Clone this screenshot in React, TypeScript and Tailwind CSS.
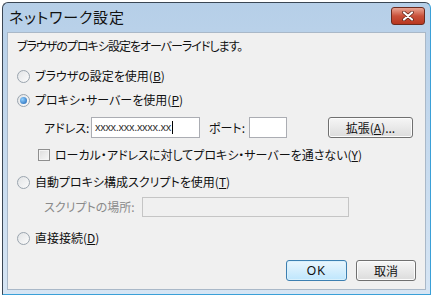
import React from "react"

const jp = "font-['Meiryo_UI','Noto_Sans_CJK_JP',sans-serif] [font-feature-settings:'palt']"

function Radio({ checked }: { checked?: boolean }) {
  return (
    <span className="w-[13px] h-[13px] rounded-full border border-[#9aa4ae] bg-gradient-to-br from-[#e2e4e6] to-[#fbfbfb] flex items-center justify-center shrink-0">
      {checked && <span className="w-[7px] h-[7px] rounded-full bg-[radial-gradient(circle_at_35%_35%,#8fd0ff,#1a5fb0)]" />}
    </span>
  )
}

function Btn({ children, primary, w }: { children: React.ReactNode; primary?: boolean; w: string }) {
  return (
    <div
      className={`${w} h-[21px] rounded-[3px] border flex items-center justify-center text-[12px] text-[#111] ${
        primary
          ? "border-[#3c7fb1] bg-gradient-to-b from-[#eaf6fd] to-[#bee6fd] shadow-[inset_0_0_0_1px_#d9f0fc]"
          : "border-[#707070] bg-gradient-to-b from-[#f6f6f6] to-[#dcdcdc] shadow-[inset_0_0_0_1px_#fcfcfc]"
      }`}
    >
      {children}
    </div>
  )
}

export default function App() {
  return (
    <div className={`w-[433px] h-[297px] bg-white pl-[2px] pt-[2px] ${jp}`}>
      <div className="w-[429px] h-[293px] rounded-t-[6px] border border-[#3a4654] border-r-[#3aa0d8] border-b-[#3aa0d8] bg-gradient-to-b from-[#b6cfe8] to-[#d6e5f4] flex flex-col px-[4px] pb-[4px]">
        {/* title bar */}
        <div className="h-[29px] flex items-center justify-between shrink-0">
          <span className="text-[15px] text-[#111] pl-[2px] tracking-[0.8px]">ネットワーク設定</span>
          <div className="w-[34px] h-[18px] mr-[1px] mt-[-3px] rounded-[3px] border border-[#6b2a1e] bg-gradient-to-b from-[#e8a493] via-[#c9503a] to-[#b8361f] flex items-center justify-center">
            <svg width="14" height="10" viewBox="0 0 14 10">
              <path d="M3 1.5 L11 8.5 M11 1.5 L3 8.5" stroke="#5a2016" strokeWidth="3.6" strokeLinecap="round" />
              <path d="M3 1.5 L11 8.5 M11 1.5 L3 8.5" stroke="#fff" strokeWidth="2.2" strokeLinecap="round" />
            </svg>
          </div>
        </div>

        {/* body */}
        <div className="flex-1 bg-[#f0f0f0] border border-[#a9b8c8] text-[12px] text-[#111] pl-[9px] pr-[8px] flex flex-col">
          <div className="mt-[4px] h-[18px] flex items-center tracking-[-1px]">ブラウザのプロキシ設定をオーバーライドします。</div>

          <div className="mt-[12px] h-[18px] flex items-center gap-[5px]">
            <Radio />
            <span>ブラウザの設定を使用(<u>B</u>)</span>
          </div>
          <div className="mt-[6px] h-[18px] flex items-center gap-[5px]">
            <Radio checked />
            <span>プロキシ・サーバーを使用(<u>P</u>)</span>
          </div>

          <div className="mt-[8px] h-[21px] flex items-center pl-[27px]">
            <span className="w-[47px]">アドレス:</span>
            <div className="w-[109px] h-[21px] bg-white border border-[#abadb3] flex items-center pl-[3px] text-[11px] text-[#333] font-['Liberation_Sans',sans-serif] tracking-[-0.3px]">
              xxxx.xxx.xxxx.xx<span className="w-px h-[13px] bg-black ml-px" />
            </div>
            <span className="ml-[9px] w-[40px]">ポート:</span>
            <div className="w-[38px] h-[21px] bg-white border border-[#abadb3]" />
            <div className="ml-[41px]">
              <Btn w="w-[85px]">拡張(<u>A</u>)...</Btn>
            </div>
          </div>

          <div className="mt-[8px] h-[18px] flex items-center gap-[5px] pl-[21px]">
            <span className="w-[12px] h-[12px] border border-[#8f8f8f] bg-gradient-to-br from-[#dcdcdc] to-[#f8f8f8] shadow-[inset_0_0_0_1px_#f4f4f4]" />
            <span>ローカル・アドレスに対してプロキシ・サーバーを通さない(<u>Y</u>)</span>
          </div>

          <div className="mt-[9px] h-[18px] flex items-center gap-[5px]">
            <Radio />
            <span>自動プロキシ構成スクリプトを使用(<u>T</u>)</span>
          </div>

          <div className="mt-[6px] h-[20px] flex items-center pl-[27px]">
            <span className="w-[98px] text-[#8a8a8a]">スクリプトの場所:</span>
            <div className="w-[207px] h-[20px] bg-[#f0f0f0] border border-[#c5c5c5]" />
          </div>

          <div className="mt-[12px] h-[18px] flex items-center gap-[5px]">
            <Radio />
            <span>直接接続(<u>D</u>)</span>
          </div>

          <div className="mt-[13px] flex justify-end gap-[9px] pr-[1px]">
            <Btn w="w-[61px]" primary>
              <span className="font-['Liberation_Sans',sans-serif] tracking-[1px]">OK</span>
            </Btn>
            <Btn w="w-[60px]">取消</Btn>
          </div>
        </div>
      </div>
    </div>
  )
}
